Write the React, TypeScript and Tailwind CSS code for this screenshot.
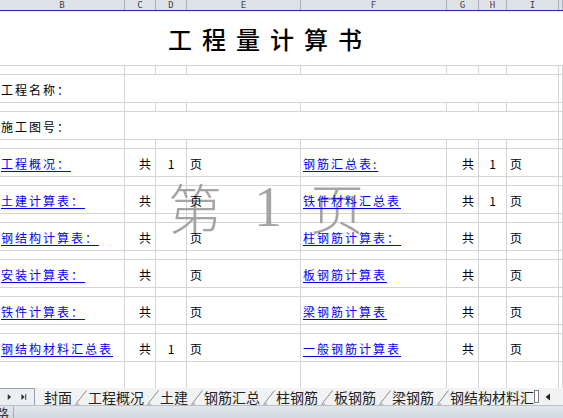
import React from 'react';

const COLS = 'grid grid-cols-[125px_31px_31px_114px_146px_32px_28px_52px_1fr]';
const CELL = 'border-r border-b border-[#d4d4d4]';
const CJK = "font-['Noto_Sans_CJK_SC','Noto_Sans',sans-serif]";

type Entry = { left: string; leftCount?: string; right: string; rightCount?: string };

const ENTRIES: Entry[] = [
  { left: '工程概况：', leftCount: '1', right: '钢筋汇总表:', rightCount: '1' },
  { left: '土建计算表：', right: '铁件材料汇总表', rightCount: '1' },
  { left: '钢结构计算表：', right: '柱钢筋计算表：' },
  { left: '安装计算表：', right: '板钢筋计算表' },
  { left: '铁件计算表：', right: '梁钢筋计算表' },
  { left: '钢结构材料汇总表', leftCount: '1', right: '一般钢筋计算表' },
];

const HEADERS = ['B', 'C', 'D', 'E', 'F', 'G', 'H', 'I', ''];
const TABS = ['封面', '工程概况', '土建', '钢筋汇总', '柱钢筋', '板钢筋', '梁钢筋', '钢结构材料汇总'];

function Spacer() {
  return (
    <div className={`${COLS} h-[9px]`}>
      {HEADERS.map((_, i) => <div key={i} className={CELL} />)}
    </div>
  );
}

function Link({ text }: { text: string }) {
  return (
    <span className="relative z-10 text-[#0000ff] underline underline-offset-[2px] tracking-[2px] whitespace-nowrap">
      {text}
    </span>
  );
}

function Txt({ children }: { children: React.ReactNode }) {
  return <span className="relative z-10">{children}</span>;
}

function DataRow({ e }: { e: Entry }) {
  const c = `${CELL} flex items-center pt-[3px]`;
  return (
    <div className={`${COLS} h-[28px] text-[12px] leading-none text-black`}>
      <div className={`${c} pl-[1px]`}><Link text={e.left} /></div>
      <div className={`${c} justify-end pr-[4px]`}><Txt>共</Txt></div>
      <div className={`${c} justify-center`}><Txt>{e.leftCount}</Txt></div>
      <div className={`${c} pl-[3px]`}><Txt>页</Txt></div>
      <div className={`${c} pl-[2px]`}><Link text={e.right} /></div>
      <div className={`${c} justify-end pr-[4px]`}><Txt>共</Txt></div>
      <div className={`${c} justify-center`}><Txt>{e.rightCount}</Txt></div>
      <div className={`${c} pl-[3px]`}><Txt>页</Txt></div>
      <div className={CELL} />
    </div>
  );
}

function InfoRow({ label }: { label: string }) {
  return (
    <div className={`${COLS} h-[28px] text-[12px] leading-none text-black`}>
      <div className={`${CELL} flex items-center pt-[3px] pl-[1px] tracking-[2px]`}>{label}</div>
      <div className={`${CELL} col-span-7`} />
      <div className={CELL} />
    </div>
  );
}

function TabSep() {
  return (
    <svg width="16" height="17" viewBox="0 0 16 17" className="shrink-0">
      <path d="M3.5 16.5 L14.5 2.5" stroke="#8d8d8d" strokeWidth="1" fill="none" />
      <path d="M3.5 16.5 L7 16.5 L5.5 14.5" stroke="#b5b5b5" strokeWidth="1" fill="none" />
    </svg>
  );
}

export default function App() {
  return (
    <div className={`w-[563px] h-[418px] overflow-hidden bg-white flex flex-col ${CJK}`}>
      {/* column headers */}
      <div className={`${COLS} h-[11px] bg-[#dfe3e8] border-b border-[#2020d8] shrink-0`}>
        {HEADERS.map((h, i) => (
          <div
            key={i}
            className="border-r border-[#a8b0ba] text-center text-[9px] leading-[10px] text-[#444] font-['DejaVu_Sans_Mono',monospace]"
          >
            {h}
          </div>
        ))}
      </div>

      {/* sheet */}
      <div className="relative flex-1 overflow-hidden">
        <div className="h-[55px] border-b border-[#d4d4d4] flex items-center pl-[168px] pt-[1px]">
          <span className="text-[24px] leading-none tracking-[10px] font-medium text-black">工程量计算书</span>
        </div>
        <Spacer />
        <InfoRow label="工程名称：" />
        <Spacer />
        <InfoRow label="施工图号：" />
        {ENTRIES.map((e, i) => (
          <React.Fragment key={i}>
            <Spacer />
            <DataRow e={e} />
          </React.Fragment>
        ))}
        <div className={`${COLS} h-[40px]`}>
          {HEADERS.map((_, i) => <div key={i} className={CELL} />)}
        </div>

        {/* page watermark */}
        <div className="absolute left-[160px] top-[168px] flex items-center text-[#a4a4a4] pointer-events-none">
          <span className="w-[70px] text-center text-[54px] leading-none font-light">第</span>
          <span className="w-[70px] text-center text-[56px] leading-none font-['Liberation_Serif',serif] pl-[6px]">1</span>
          <span className="w-[70px] text-center text-[54px] leading-none font-light pl-[4px]">页</span>
        </div>
      </div>

      {/* sheet tabs */}
      <div className="h-[17px] shrink-0 flex bg-[#f1f2f4]">
        <div className="w-[35px] h-[17px] border-t border-r border-[#9aa2ac] bg-[#eceef1] flex items-center">
          <svg width="35" height="16" viewBox="0 0 35 16">
            <path d="M8 5 L11.5 8 L8 11 Z" fill="#333" />
            <path d="M22 5 L25.5 8 L22 11 Z" fill="#333" />
            <rect x="26" y="5" width="1" height="6" fill="#333" />
          </svg>
        </div>
        <div className="w-[499px] overflow-hidden flex items-center pl-[9px] text-[14px] leading-[16px] text-[#222] whitespace-nowrap">
          {TABS.map((t, i) => (
            <React.Fragment key={t}>
              <span className="shrink-0">{t}</span>
              {i < TABS.length - 1 && <TabSep />}
            </React.Fragment>
          ))}
        </div>
        <div className="w-[5px] h-[13px] mt-[2px] border border-[#7d7d7d] bg-white" />
        <div className="flex-1 flex items-center pl-[6px]">
          <svg width="6" height="8" viewBox="0 0 6 8">
            <path d="M5 0.5 L0.5 4 L5 7.5 Z" fill="#222" />
          </svg>
        </div>
      </div>

      {/* status bar */}
      <div className="h-[13px] shrink-0 flex border-t border-[#b9c0c9] bg-gradient-to-b from-[#e3e7ec] to-[#d3d9e0]">
        <div className="w-[14px] overflow-hidden border-r border-[#a7afb9]">
          <span className="block -ml-[5px] text-[14px] leading-[14px] text-[#333]">路</span>
        </div>
      </div>
    </div>
  );
}
